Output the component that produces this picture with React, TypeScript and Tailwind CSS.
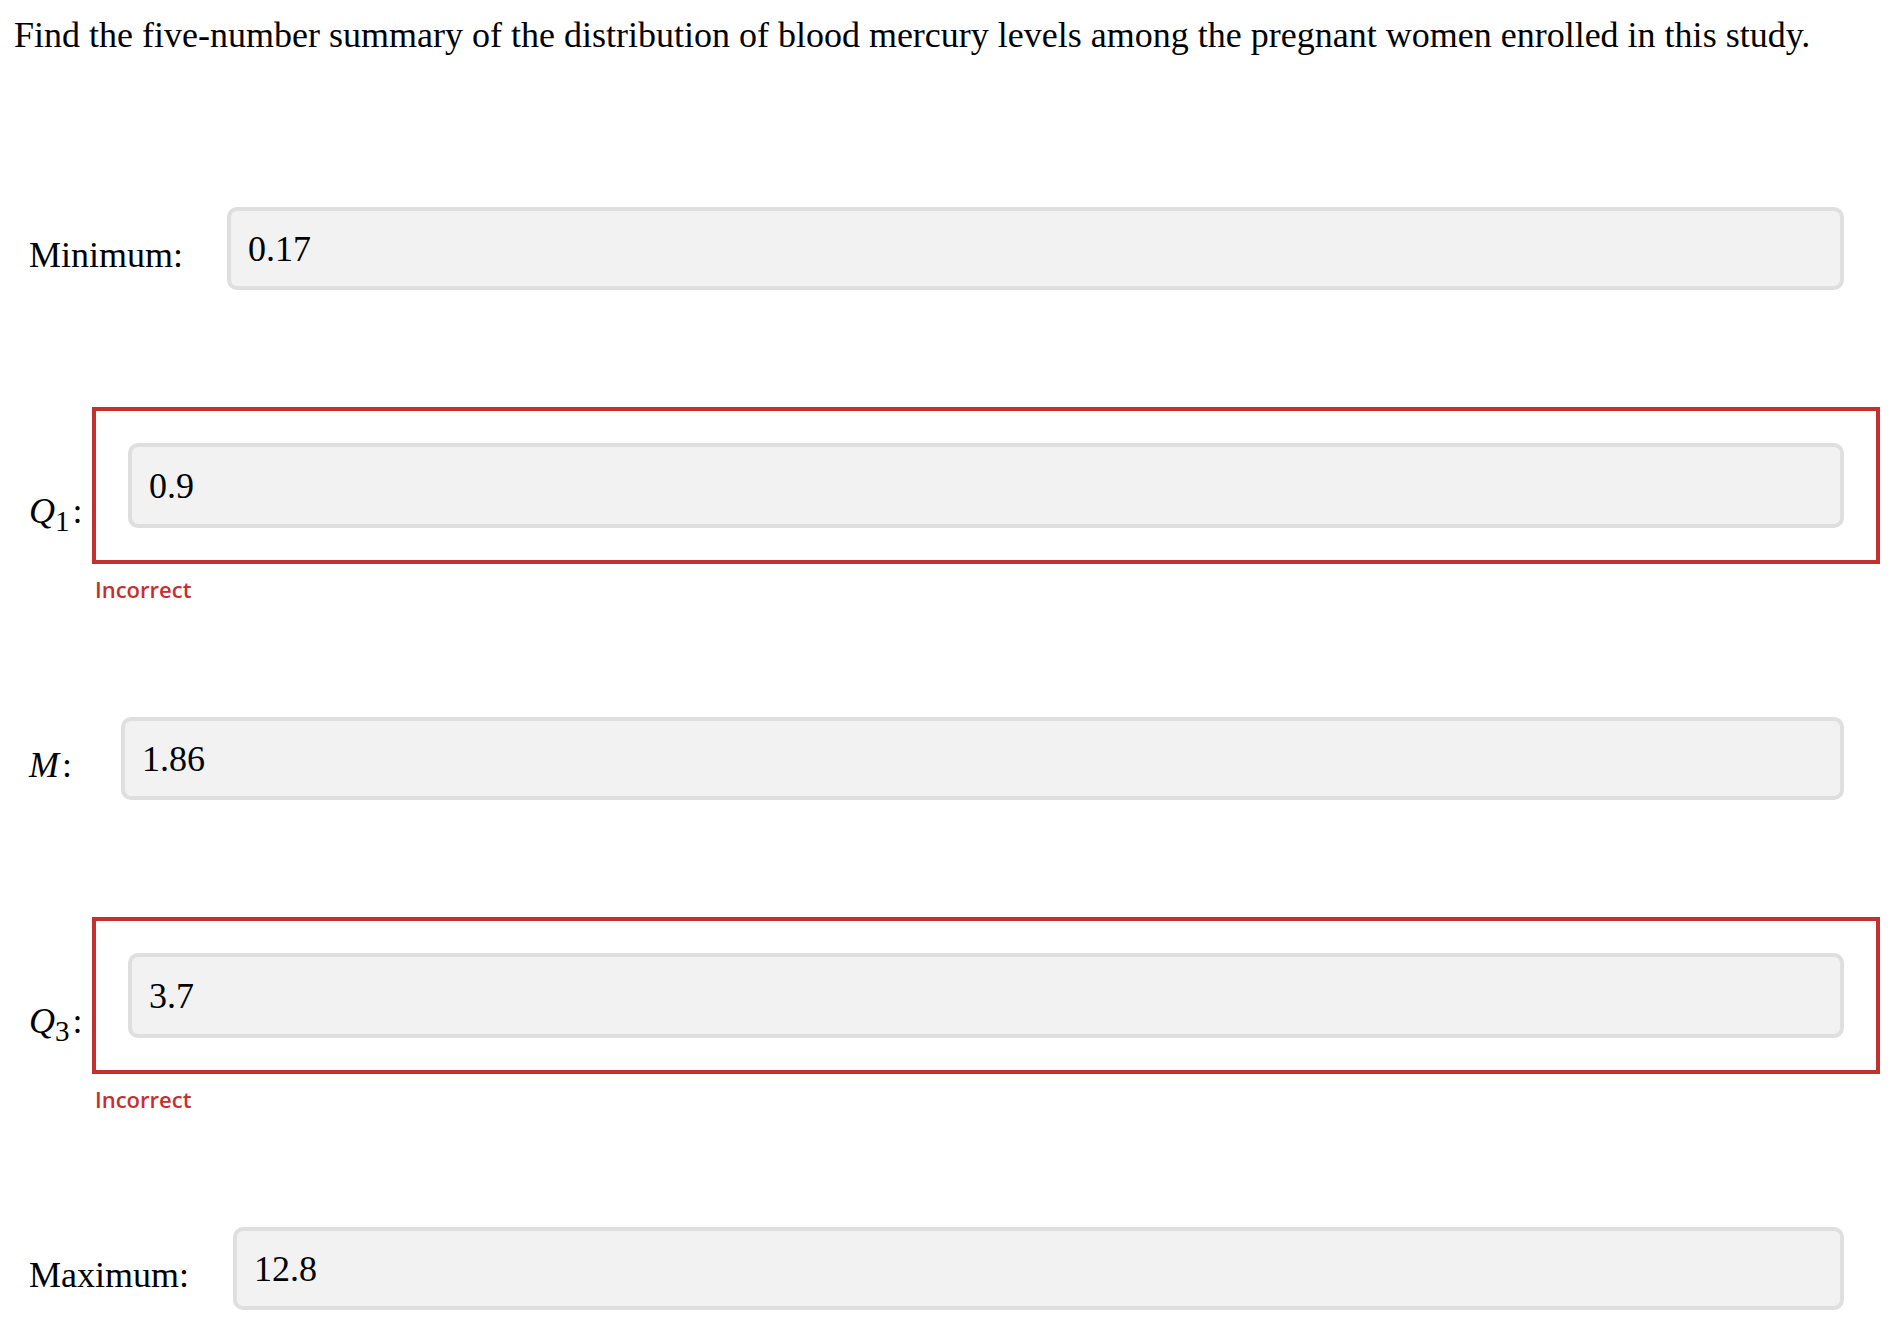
import React from "react";

const serif = { fontFamily: '"Liberation Serif", "Times New Roman", serif' };

function Field({ value, h }: { value: string; h: string }) {
  return (
    <input
      readOnly
      value={value}
      className={`flex-1 min-w-0 ${h} rounded-[10px] border-[4px] border-[#dfdfdf] bg-[#f2f2f2] pl-[17px] text-[36px] text-black outline-none`}
      style={serif}
    />
  );
}

function Incorrect() {
  return (
    <div
      className="mt-[11px] ml-[93px] pl-[2px] text-[22px] leading-[28px] font-semibold text-[#c62f2f]"
      style={{ fontFamily: '"Open Sans", "Noto Sans", sans-serif' }}
    >
      Incorrect
    </div>
  );
}

export default function App() {
  return (
    <div className="bg-white text-black w-[1896px] h-[1338px] overflow-hidden" style={serif}>
      <p className="mt-[15px] pl-[14px] text-[36px] leading-[40px] whitespace-nowrap">
        Find the five-number summary of the distribution of blood mercury levels among the pregnant women enrolled in this study.
      </p>

      {/* Minimum */}
      <div className="mt-[152px] flex items-start pl-[29px] pr-[52px]">
        <div className="w-[198px] flex-none mt-[28px] text-[36px] leading-[40px]">Minimum:</div>
        <Field value="0.17" h="h-[83px]" />
      </div>

      {/* Q1 */}
      <div className="mt-[117px] flex items-start pl-[29px] pr-[52px]">
        <div className="w-[63px] flex-none mt-[84px] text-[36px] leading-[40px] whitespace-nowrap">
          <span className="italic">Q</span>
          <span className="text-[29px] align-sub">1</span>
          <span className="ml-[3px]">:</span>
        </div>
        <div className="flex-1 min-w-0 flex border-4 border-[#c4302f] p-[32px] -mr-[36px]">
          <Field value="0.9" h="h-[85px]" />
        </div>
      </div>
      <Incorrect />

      {/* M */}
      <div className="mt-[114px] flex items-start pl-[29px] pr-[52px]">
        <div className="w-[92px] flex-none mt-[28px] text-[36px] leading-[40px] whitespace-nowrap">
          <span className="italic">M</span>
          <span className="ml-[3px]">:</span>
        </div>
        <Field value="1.86" h="h-[83px]" />
      </div>

      {/* Q3 */}
      <div className="mt-[117px] flex items-start pl-[29px] pr-[52px]">
        <div className="w-[63px] flex-none mt-[84px] text-[36px] leading-[40px] whitespace-nowrap">
          <span className="italic">Q</span>
          <span className="text-[29px] align-sub">3</span>
          <span className="ml-[3px]">:</span>
        </div>
        <div className="flex-1 min-w-0 flex border-4 border-[#c4302f] p-[32px] -mr-[36px]">
          <Field value="3.7" h="h-[85px]" />
        </div>
      </div>
      <Incorrect />

      {/* Maximum */}
      <div className="mt-[114px] flex items-start pl-[29px] pr-[52px]">
        <div className="w-[204px] flex-none mt-[28px] text-[36px] leading-[40px]">Maximum:</div>
        <Field value="12.8" h="h-[83px]" />
      </div>
    </div>
  );
}
